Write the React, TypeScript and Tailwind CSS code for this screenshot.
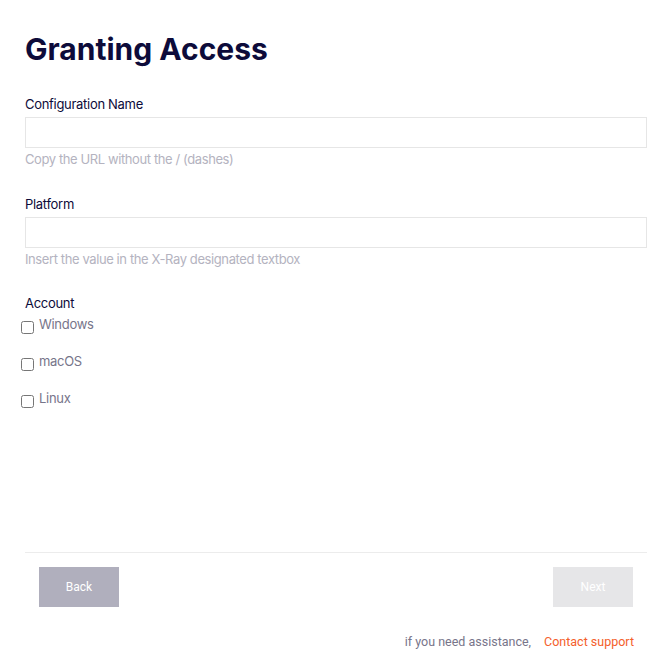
import { useState } from "react";

const platforms = ["Windows", "macOS", "Linux"];

function Field({ label, hint }: { label: string; hint: string }) {
  return (
    <div className="flex flex-col">
      <label className="text-[13px] leading-[16px] tracking-[-0.3px] text-[#0d0b3a]">{label}</label>
      <input
        type="text"
        className="mt-[5px] h-[31px] w-full border border-[#e6e6e6] bg-white px-2 text-[13px] outline-none"
      />
      <p className="mt-[3px] text-[13px] leading-[16px] tracking-[-0.4px] text-[#b4b3c0]">{hint}</p>
    </div>
  );
}

export default function App() {
  const [checked, setChecked] = useState<Record<string, boolean>>({});

  return (
    <div className="flex h-[663px] flex-col bg-white font-['Inter','Noto_Sans',sans-serif]">
      <div className="flex flex-1 flex-col px-[25px] pr-[22px] pt-[30px]">
        <h1 className="text-[30px] font-bold leading-[38px] text-[#0d0b3a]">
          Granting Access
        </h1>
        <div className="mt-[28px] flex flex-col gap-[29px]">
          <Field label="Configuration Name" hint="Copy the URL without the / (dashes)" />
          <Field label="Platform" hint="Insert the value in the X-Ray designated textbox" />
        </div>
        <div className="mt-[28px]">
          <div className="text-[13px] leading-[16px] tracking-[-0.3px] text-[#0d0b3a]">Account</div>
          <div className="-ml-[4px] mt-[5px] flex flex-col gap-[19px]">
            {platforms.map((p) => (
              <label
                key={p}
                className="flex items-start gap-[5px] text-[13px] leading-[16px] tracking-[-0.3px] text-[#77758a]"
              >
                <input
                  type="checkbox"
                  checked={!!checked[p]}
                  onChange={() => setChecked({ ...checked, [p]: !checked[p] })}
                  className="mt-[5px] h-[13px] w-[13px]"
                />
                <span>{p}</span>
              </label>
            ))}
          </div>
        </div>
      </div>
      <div className="mx-[25px] mr-[22px] border-t border-[#ececec]" />
      <div className="flex justify-between px-[39px] pr-[36px] pt-[14px]">
        <button className="h-[40px] w-[80px] bg-[#b0afbd] text-[12px] text-white font-['Roboto',sans-serif]">
          Back
        </button>
        <button className="h-[40px] w-[80px] bg-[#e6e6e8] text-[12px] text-white font-['Roboto',sans-serif]">
          Next
        </button>
      </div>
      <div className="flex justify-end gap-[13px] px-[35px] pb-[13px] pt-[27px] text-[12.5px] leading-[16px] font-['Roboto',sans-serif]">
        <span className="text-[#77758a]">if you need assistance,</span>
        <a href="#" className="text-[#f4602b]">Contact support</a>
      </div>
    </div>
  );
}
